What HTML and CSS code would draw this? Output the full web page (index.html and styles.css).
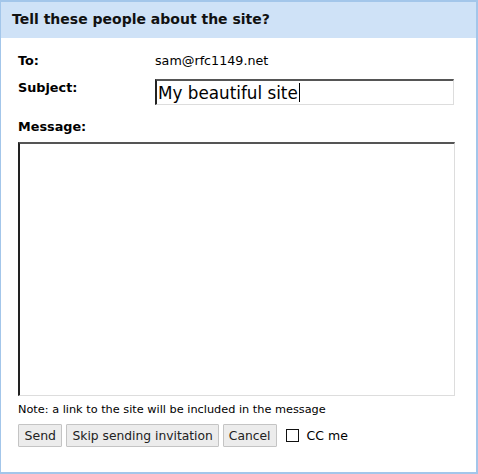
FILE: index.html
```html
<!DOCTYPE html>
<html>
<head>
<meta charset="utf-8">
<link rel="stylesheet" href="styles.css">
</head>
<body>
<div class="dialog">
  <div class="header">Tell these people about the site?</div>
  <div class="body">
    <div class="row row-to">
      <div class="label">To:</div>
      <div class="value">sam@rfc1149.net</div>
    </div>
    <div class="row row-subject">
      <div class="label">Subject:</div>
      <div class="input"><span class="input-text">My beautiful site</span><span class="caret"></span></div>
    </div>
    <div class="label label-msg">Message:</div>
    <div class="textarea"></div>
    <div class="note">Note: a link to the site will be included in the message</div>
    <div class="actions">
      <button class="btn btn-send">Send</button>
      <button class="btn">Skip sending invitation</button>
      <button class="btn">Cancel</button>
      <span class="check"></span>
      <span class="cc">CC me</span>
    </div>
  </div>
</div>
</body>
</html>
```

FILE: styles.css
```css
html, body {
  margin: 0;
  padding: 0;
  background: #fff;
}
.dialog {
  width: 475px;
  height: 470px;
  border-style: solid;
  border-color: #a3c6ea;
  border-width: 2px 2px 2px 1px;
  font-family: "DejaVu Sans", sans-serif;
  color: #000;
  background: #fff;
}
.header {
  background: #cfe2f7;
  height: 36px;
  box-sizing: border-box;
  padding: 9px 0 0 11px;
  font-size: 14px;
  font-weight: bold;
  line-height: 17px;
  color: #111;
}
.body {
  padding: 0 0 0 17px;
}
.row {
  display: flex;
  align-items: flex-start;
}
.label {
  width: 137px;
  font-size: 12.8px;
  font-weight: bold;
  line-height: 15px;
}
.row-to {
  padding-top: 15px;
  height: 26px;
}
.value {
  font-size: 12.7px;
  line-height: 15px;
}
.row-subject {
  height: 40px;
}
.row-subject .label {
  padding-top: 1px;
}
.input {
  width: 295px;
  height: 23px;
  border-style: solid;
  border-width: 2px 1px 1px 2px;
  border-color: #555 #ddd #ddd #222;
  display: flex;
  align-items: center;
  padding-left: 1px;
  font-size: 16.8px;
}
.caret {
  display: inline-block;
  width: 1px;
  height: 19px;
  background: #000;
  margin-left: 1px;
}
.label-msg {
  height: 23px;
  width: auto;
}
.textarea {
  width: 434px;
  height: 251px;
  border-style: solid;
  border-width: 2px 1px 1px 2px;
  border-color: #555 #ddd #ddd #222;
}
.note {
  font-size: 11.3px;
  line-height: 14px;
  padding-top: 7px;
  height: 21px;
}
.actions {
  display: flex;
  align-items: center;
  gap: 4px;
}
.btn {
  font-family: "DejaVu Sans", sans-serif;
  font-size: 12.3px;
  height: 23px;
  padding: 0 5px;
  background: #ececec;
  border: 1px solid #c4c4c4;
  border-radius: 1px;
  color: #222;
  margin: 0;
}
.btn-send {
  font-size: 12.5px;
  padding: 0 5.5px;
}
.check {
  display: inline-block;
  width: 11px;
  height: 11px;
  border: 1px solid #111;
  margin-left: 5px;
}
.cc {
  font-size: 12.5px;
  margin-left: 4px;
}
```
